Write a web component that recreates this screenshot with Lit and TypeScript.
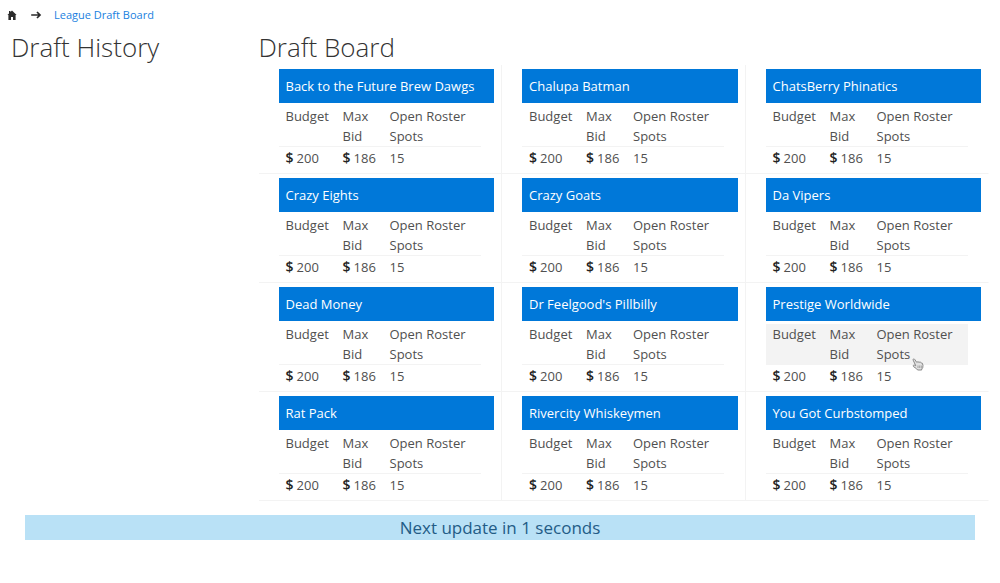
import { LitElement, html, css } from "lit";
import { customElement, property, state } from "lit/decorators.js";
import { classMap } from "lit/directives/class-map.js";

interface Team {
  name: string;
  budget: number;
  maxBid: number;
  openSpots: number;
}

const teamNames = [
  "Back to the Future Brew Dawgs",
  "Chalupa Batman",
  "ChatsBerry Phinatics",
  "Crazy Eights",
  "Crazy Goats",
  "Da Vipers",
  "Dead Money",
  "Dr Feelgood's Pillbilly",
  "Prestige Worldwide",
  "Rat Pack",
  "Rivercity Whiskeymen",
  "You Got Curbstomped",
];

@customElement("team-card")
export class TeamCard extends LitElement {
  @property({ attribute: false }) team!: Team;
  @property({ type: Boolean }) active = false;

  static styles = css`
    :host {
      display: block;
      padding: 4px 7px 4px 20px;
      border-bottom: 1px solid #f3f3f3;
      border-right: 1px solid #f3f3f3;
    }
    :host(.last-column) {
      border-right-color: transparent;
    }
    .title {
      margin: 0 0 3px;
      padding: 0 7px;
      background: #0078d9;
      color: #fff;
      font-size: 13px;
      font-weight: 400;
      line-height: 34px;
      white-space: nowrap;
    }
    .stats {
      width: 202px;
      border-collapse: separate;
      border-spacing: 0;
      table-layout: fixed;
      line-height: 20px;
      color: #505050;
    }
    th,
    td {
      box-sizing: border-box;
      padding: 0 0 0 7px;
      text-align: left;
      vertical-align: top;
      font-weight: 400;
    }
    .budget {
      width: 57px;
    }
    .bid {
      width: 47px;
      padding-right: 4px;
    }
    th {
      border-bottom: 1px solid #f3f3f3;
    }
    td {
      white-space: nowrap;
      line-height: 22px;
    }
    .active th {
      background: #f3f3f3;
    }
    .amount {
      display: flex;
      gap: 3px;
    }
    .sign {
      color: #222;
      font-weight: 600;
      font-size: 14px;
    }
    .spots {
      position: relative;
    }
    .pointer {
      position: absolute;
      left: 42px;
      top: 34px;
      width: 12px;
      height: 14px;
    }
  `;

  render() {
    const t = this.team;
    return html`
      <h3 class="title">${t.name}</h3>
      <table class="stats">
        <thead>
          <tr class=${classMap({ active: this.active })}>
            <th class="budget" scope="col">Budget</th>
            <th class="bid" scope="col">Max Bid</th>
            <th class="spots" scope="col">
              Open Roster<br />Spots
              ${this.active
                ? html`<svg class="pointer" viewBox="0 0 12 14" aria-hidden="true">
                    <path
                      d="M1.2 2.2C.6 1.1 2 .4 2.7 1.4l2 2.9 1.1-.5 1.3.4 1.2-.1 1 .8 1 .3.7 2.2-.3 2.4-1 1.2v1H5.6L4.4 10.6 1.5 8.6C.5 7.7 1.7 6.7 2.6 7.2l1.2.6z"
                      fill="#e2e2e2"
                      stroke="#888"
                      stroke-width="1"
                    />
                    <path d="M6 7.5v2.5M7.7 7.5v2.5M9.3 7.5v2.5" stroke="#888" stroke-width=".7" />
                  </svg>`
                : ""}
            </th>
          </tr>
        </thead>
        <tbody>
          <tr>
            <td><span class="amount"><span class="sign">$</span>${t.budget}</span></td>
            <td><span class="amount"><span class="sign">$</span>${t.maxBid}</span></td>
            <td><span class="amount">${t.openSpots}</span></td>
          </tr>
        </tbody>
      </table>
    `;
  }
}

@customElement("app-root")
export class AppRoot extends LitElement {
  @state() private teams: Team[] = teamNames.map((name) => ({
    name,
    budget: 200,
    maxBid: 186,
    openSpots: 15,
  }));
  @state() private activeTeam = "Prestige Worldwide";
  @state() private seconds = 1;

  static styles = css`
    :host {
      display: block;
      background: #fff;
      color: #505050;
      font-family: "Open Sans", "Noto Sans", sans-serif;
      font-size: 13px;
    }
    .crumbs {
      display: flex;
      align-items: center;
      height: 30px;
      padding: 0 6px;
      color: #2b2b2b;
    }
    .crumbs a {
      color: #1a7fe0;
      text-decoration: none;
      font-size: 11px;
      line-height: 16px;
    }
    .crumbs .home {
      display: flex;
      color: #2b2b2b;
    }
    .icon {
      display: block;
      width: 12px;
      height: 12px;
    }
    .arrow {
      margin: 0 12px;
    }
    .columns {
      display: grid;
      grid-template-columns: minmax(0, 1fr) minmax(0, 3fr);
      column-gap: 4px;
      padding: 0 11px;
    }
    .heading {
      margin: 0;
      font-size: 26px;
      font-weight: 300;
      line-height: 35px;
      color: #333;
    }
    .board {
      display: grid;
      grid-template-columns: repeat(3, minmax(0, 1fr));
    }
    .update {
      margin: 14px 25px 0;
      background: #b9e1f6;
      color: #235c86;
      font-size: 17px;
      line-height: 25px;
      text-align: center;
    }
  `;

  render() {
    return html`
      <nav class="crumbs" aria-label="Breadcrumb">
        <a class="home" href="#" aria-label="Home">
          <svg class="icon" viewBox="0 0 12 12" fill="currentColor" aria-hidden="true">
            <path d="M6 1.5 10.6 6H9.6V11H7V8H5V11H2.4V6H1.4L3 4.4V2H4.4V3z" />
          </svg>
        </a>
        <svg class="icon arrow" viewBox="0 0 12 12" fill="none" stroke="currentColor" stroke-width="1.7" aria-hidden="true">
          <path d="M1.2 6h8.8M7 3 10 6 7 9" />
        </svg>
        <a href="#board">League Draft Board</a>
      </nav>
      <main class="columns">
        <section>
          <h2 class="heading">Draft History</h2>
        </section>
        <section id="board">
          <h2 class="heading">Draft Board</h2>
          <div class="board">
            ${this.teams.map(
              (team, i) => html`<team-card
                class=${classMap({ "last-column": i % 3 === 2 })}
                .team=${team}
                ?active=${team.name === this.activeTeam}
              ></team-card>`
            )}
          </div>
        </section>
      </main>
      <div class="update" role="status">Next update in ${this.seconds} seconds</div>
    `;
  }
}
